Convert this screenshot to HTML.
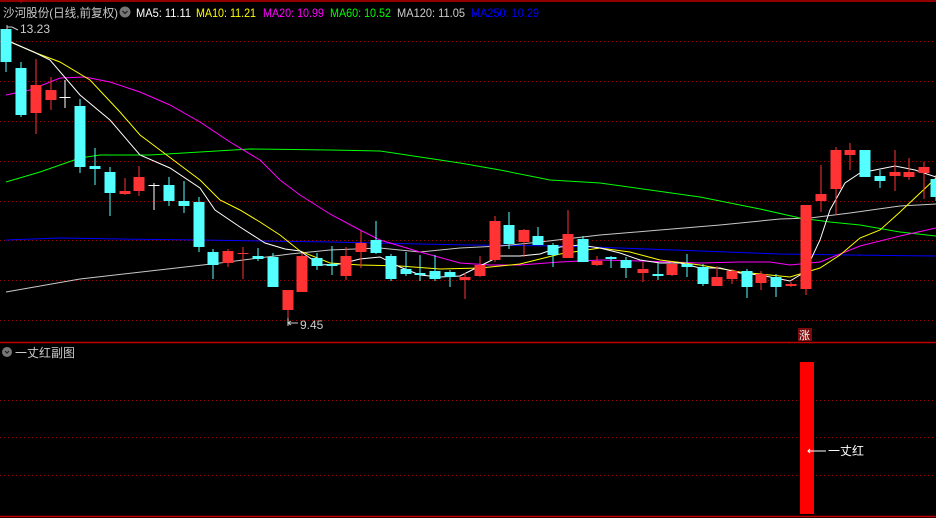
<!DOCTYPE html>
<html><head><meta charset="utf-8"><style>
html,body{margin:0;padding:0;background:#000;width:936px;height:518px;overflow:hidden}
svg{display:block}
text{font-family:"Liberation Sans","Noto Sans CJK SC",sans-serif;font-size:12px}
</style></head><body>
<svg id="s" width="936" height="518" xmlns="http://www.w3.org/2000/svg">
<rect width="936" height="518" fill="#000"/>
<line x1="0" y1="1" x2="936" y2="1" stroke="#c00000" stroke-width="1.5"/>
<line x1="21" y1="0" x2="21" y2="3" stroke="#c00000"/>
<g id="grid" stroke="#a00000" stroke-dasharray="1,3" stroke-width="1"></g>
<line x1="0" y1="342.5" x2="936" y2="342.5" stroke="#c00000" stroke-width="1.5"/>
<line x1="0" y1="516.5" x2="936" y2="516.5" stroke="#c00000" stroke-width="1.5"/>
<g id="lines" fill="none" stroke-width="1"></g>
<g id="candles"></g>
<text x="3" y="17" fill="#c8c8c8" textLength="115" lengthAdjust="spacingAndGlyphs">沙河股份(日线,前复权)</text>
<circle cx="125" cy="12" r="5.5" fill="#777"/>
<path d="M122.5 11 L125 13.5 L127.5 11" stroke="#222" fill="none" stroke-width="1.3"/>
<text x="136" y="17" fill="#fff" textLength="55" lengthAdjust="spacingAndGlyphs">MA5: 11.11</text>
<text x="196" y="17" fill="#ff0" textLength="60" lengthAdjust="spacingAndGlyphs">MA10: 11.21</text>
<text x="263" y="17" fill="#f0f" textLength="61" lengthAdjust="spacingAndGlyphs">MA20: 10.99</text>
<text x="330" y="17" fill="#0f0" textLength="61" lengthAdjust="spacingAndGlyphs">MA60: 10.52</text>
<text x="397" y="17" fill="#ccc" textLength="68" lengthAdjust="spacingAndGlyphs">MA120: 11.05</text>
<text x="471" y="17" fill="#00f" textLength="68" lengthAdjust="spacingAndGlyphs">MA250: 10.29</text>
<text x="20" y="33" fill="#ccc">13.23</text>
<path d="M7 25 V30 M7 27 L12 27 L18 30" stroke="#ccc" fill="none"/>
<text x="300" y="329" fill="#ccc">9.45</text>
<path d="M288 318 V326 M288 323 H298 M291 321 L288 323 L291 325" stroke="#ccc" fill="none"/>
<rect x="798" y="328" width="14" height="13" fill="#7a0b0b"/>
<text x="799" y="339" fill="#fff" style="font-size:11px">涨</text>
<circle cx="7" cy="352" r="5" fill="#777"/>
<path d="M5 351 L7 353 L9 351" stroke="#222" fill="none" stroke-width="1.2"/>
<text x="15" y="357" fill="#ccc">一丈红副图</text>
<rect x="800" y="362" width="14" height="152" fill="#ff0000"/>
<path d="M808 451 H826 M810 449 L808 451 L810 453" stroke="#fff" fill="none"/>
<text x="828" y="455" fill="#fff">一丈红</text>
</svg>
<script>
var NS="http://www.w3.org/2000/svg";
function el(p,t,a){var e=document.createElementNS(NS,t);for(var k in a)e.setAttribute(k,a[k]);p.appendChild(e);return e;}
var g=document.getElementById('grid');
[41,81,121,161,201,240,280,320,400,437,475].forEach(function(y){el(g,'line',{x1:0,y1:y+.5,x2:936,y2:y+.5});});
var L=document.getElementById('lines');
var ls=[
["#0000ff",[[6,240],[60,238],[120,239],[200,240],[260,241],[330,242],[420,244],[470,245],[560,246],[620,248],[700,251],[780,254],[850,255],[936,256]]],
["#c8c8c8",[[6,292],[80,279],[150,271],[220,263],[290,254],[330,250],[380,248],[420,252],[460,248],[500,246],[540,242],[600,235],[660,230],[720,225],[780,219],[810,218],[850,213],[900,206],[936,204]]],
["#00ff00",[[6,182],[40,172],[80,158],[100,155],[150,155],[250,149],[330,150],[380,151],[420,157],[460,163],[500,170],[550,180],[600,183],[650,190],[700,197],[760,209],[800,218],[830,222],[860,225],[900,232],[936,236]]],
["#ff00ff",[[6,95],[30,90],[60,78],[85,77],[110,82],[140,92],[170,105],[200,122],[230,142],[260,160],[280,180],[300,195],[330,214],[360,230],[380,240],[420,252],[460,263],[490,265],[520,265],[560,262],[600,260],[640,261],[700,263],[740,262],[770,262],[790,265],[800,264],[820,262],[860,246],[900,236],[936,228]]],
["#ffff00",[[6,40],[36,53],[60,62],[90,80],[120,112],[140,135],[160,150],[180,165],[200,180],[220,200],[240,210],[260,222],[280,235],[300,251],[330,263],[360,265],[400,266],[440,269],[480,268],[520,264],[560,254],[600,248],[630,252],[660,260],[700,265],[740,272],[790,277],[820,268],[840,255],[860,238],[880,230],[900,212],[936,178]]],
["#ffffff",[[6,40],[36,53],[50,60],[80,95],[110,120],[140,155],[170,168],[200,188],[215,210],[240,227],[265,243],[285,249],[300,251],[320,265],[340,264],[360,259],[380,257],[400,267],[420,275],[440,277],[460,276],[480,266],[500,256],[520,256],[540,254],[560,247],[580,245],[600,248],[620,253],[640,260],[660,263],[680,263],[700,268],[720,268],[740,273],[760,275],[790,281],[805,272],[820,240],[830,210],[845,183],[860,173],[875,170],[895,166],[915,170],[936,177]]]
];
ls.forEach(function(l){el(L,'polyline',{points:l[1].map(function(p){return p.join(',')}).join(' '),stroke:l[0]});});
var cs=[
[6,'c',29,62,29,72],[21,'c',68,115,62,117],[36,'r',85,113,59,134],[51,'r',90,100,77,110],[65,'w',97,98,80,108],
[80,'c',106,167,99,173],[95,'c',166,169,148,185],[110,'c',172,193,167,216],[125,'r',191,194,178,195],[139,'r',177,191,166,196],
[154,'w',185,186,183,210],[169,'c',185,201,177,206],[184,'c',201,206,181,213],[199,'c',202,247,197,252],[213,'c',252,265,249,279],
[228,'r',251,263,249,267],[243,'r',253,254,247,279],[258,'c',256,259,248,261],[273,'c',257,287,253,287],[288,'r',290,310,290,323],
[302,'r',256,292,253,292],[317,'c',258,266,253,270],[332,'c',264,266,246,275],[346,'r',256,276,247,280],[361,'r',243,252,231,268],
[376,'c',240,253,221,254],[391,'c',256,279,254,281],[406,'c',269,274,252,276],[420,'c',273,275,255,281],[435,'c',271,279,255,281],
[450,'c',272,277,270,287],[465,'r',277,280,273,299],[480,'r',265,276,256,277],[495,'r',221,260,216,262],[509,'c',225,244,212,249],
[524,'r',230,242,229,257],[538,'c',236,245,227,245],[553,'c',245,255,243,267],[568,'r',234,258,210,258],[583,'c',239,262,236,262],
[597,'r',261,265,256,266],[611,'c',257,259,256,268],[626,'c',260,268,257,278],[643,'r',269,273,262,282],[658,'c',274,276,263,280],
[672,'r',264,275,262,276],[687,'c',264,267,254,277],[703,'c',267,284,264,286],[717,'r',277,286,266,286],[732,'r',271,279,269,284],
[747,'c',271,287,269,298],[761,'r',274,283,271,290],[776,'c',277,287,274,297],[791,'r',284,286,282,287],[806,'r',205,289,205,295],
[821,'r',194,201,165,212],[836,'r',150,189,147,215],[850,'r',150,155,143,170],[865,'c',150,177,150,177],[880,'c',176,181,170,188],
[895,'r',172,176,150,191],[909,'r',172,177,158,180],[924,'r',167,173,162,199],[936,'c',179,197,175,201]
];
var C=document.getElementById('candles');
cs.forEach(function(c){
 var col=c[1]=='c'?'#54ffff':(c[1]=='r'?'#ff3333':'#ffffff');
 el(C,'rect',{x:c[0]-0.5,y:c[4],width:1,height:c[5]-c[4],fill:col});
 el(C,'rect',{x:c[0]-5.5,y:c[2],width:11,height:Math.max(1,c[3]-c[2]),fill:col});
});
</script>
</body></html>
